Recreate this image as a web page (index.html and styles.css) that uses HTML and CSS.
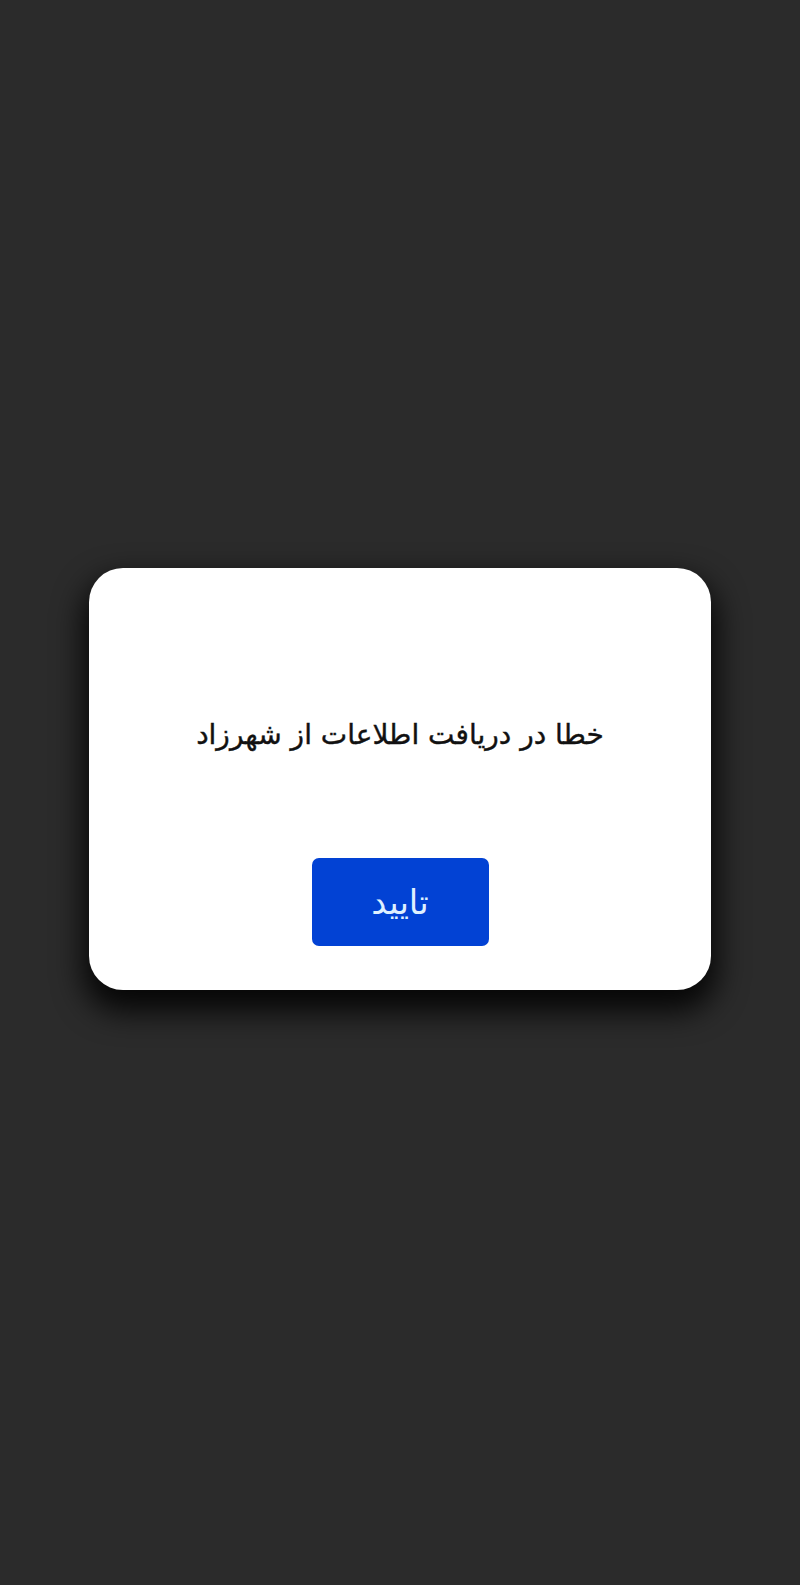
FILE: index.html
```html
<!DOCTYPE html>
<html lang="fa" dir="rtl">
<head>
<meta charset="utf-8">
<title>خطا</title>
<link rel="stylesheet" href="styles.css">
</head>
<body>
<div class="screen">
  <div class="dialog">
    <p class="message">خطا در دریافت اطلاعات از شهرزاد</p>
    <button class="confirm" type="button">تایید</button>
  </div>
</div>
</body>
</html>
```

FILE: styles.css
```css
html, body {
  margin: 0;
  padding: 0;
  background: #2b2b2b;
}
.screen {
  width: 800px;
  height: 1585px;
  box-sizing: border-box;
  padding-top: 568px;
  display: flex;
  flex-direction: column;
  align-items: center;
  background: #2b2b2b;
}
.dialog {
  width: 622px;
  height: 422px;
  box-sizing: border-box;
  background: #ffffff;
  border-radius: 34px;
  box-shadow: 0 16px 30px 6px rgba(0, 0, 0, 0.85);
  display: flex;
  flex-direction: column;
  align-items: center;
  padding-top: 147px;
}
.message {
  margin: 0;
  font-family: "DejaVu Sans", "Noto Sans", sans-serif;
  font-size: 28px;
  line-height: 40px;
  color: #111111;
  -webkit-text-stroke: 0.4px #111111;
  text-align: center;
}
.confirm {
  margin-top: 103px;
  width: 177px;
  height: 88px;
  border: none;
  border-radius: 7px;
  background: #0242d4;
  color: #dff0ff;
  font-family: "DejaVu Sans", "Noto Sans", sans-serif;
  font-size: 34px;
  padding: 0;
}
```
